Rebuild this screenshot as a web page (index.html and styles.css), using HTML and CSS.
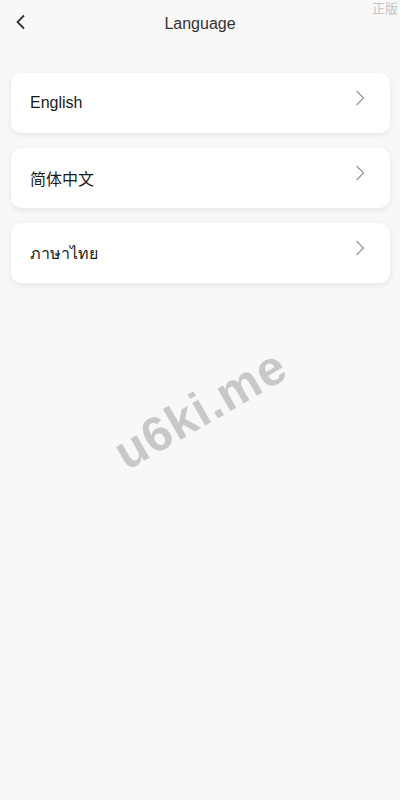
FILE: index.html
```html
<!DOCTYPE html>
<html lang="en">
<head>
    <meta charset="UTF-8">
    <meta name="viewport" content="width=device-width, initial-scale=1.0">
    <title>Language</title>
    <link rel="stylesheet" href="styles.css">
</head>
<body>
    <div class="page">
        <div class="header">
            <a class="back" href="#">
                <svg width="12" height="16" viewBox="0 0 12 16"><path d="M9 1.5 L2.5 8 L9 14.5" fill="none" stroke="#333" stroke-width="1.8"/></svg>
            </a>
            <h1>Language</h1>
            <span class="tag">正版</span>
        </div>
        <div class="lang-list">
            <a class="lang-item" href="#">
                <span>English</span>
                <svg width="10" height="16" viewBox="0 0 10 16"><path d="M1.5 1 L8.5 8 L1.5 15" fill="none" stroke="#999" stroke-width="1.3"/></svg>
            </a>
            <a class="lang-item" href="#">
                <span>简体中文</span>
                <svg width="10" height="16" viewBox="0 0 10 16"><path d="M1.5 1 L8.5 8 L1.5 15" fill="none" stroke="#999" stroke-width="1.3"/></svg>
            </a>
            <a class="lang-item" href="#">
                <span>ภาษาไทย</span>
                <svg width="10" height="16" viewBox="0 0 10 16"><path d="M1.5 1 L8.5 8 L1.5 15" fill="none" stroke="#999" stroke-width="1.3"/></svg>
            </a>
        </div>
        <div class="watermark">u6ki.me</div>
    </div>
</body>
</html>
```

FILE: styles.css
```css
* {
    box-sizing: border-box;
}
body {
    margin: 0;
    font-family: Arial, "Liberation Sans", "Noto Sans CJK SC", sans-serif;
    background-color: #fff;
}
.page {
    position: relative;
    width: 400px;
    height: 800px;
    background-color: #f8f8f8;
    overflow: hidden;
}
.header {
    position: relative;
    height: 47px;
    display: flex;
    align-items: center;
    justify-content: center;
}
.header h1 {
    margin: 0;
    font-size: 16px;
    font-weight: normal;
    color: #333;
}
.back {
    position: absolute;
    left: 15px;
    top: 14px;
    line-height: 0;
}
.tag {
    position: absolute;
    right: 2px;
    top: -2px;
    font-size: 13px;
    color: #c4c4c4;
}
.lang-list {
    display: flex;
    flex-direction: column;
    gap: 15px;
    padding: 26px 10px 0 11px;
}
.lang-item {
    height: 60px;
    display: flex;
    align-items: center;
    justify-content: space-between;
    padding: 0 25px 0 19px;
    background-color: #fff;
    border-radius: 10px;
    box-shadow: 0 2px 6px rgba(0, 0, 0, 0.08);
    text-decoration: none;
    color: #1a1a1a;
    font-size: 16px;
}
.lang-item svg {
    margin-top: -10px;
}
.watermark {
    position: absolute;
    left: 104px;
    top: 432px;
    font-size: 49px;
    font-weight: bold;
    color: #c8c8c8;
    transform: rotate(-30deg);
    transform-origin: left top;
    letter-spacing: 1px;
    white-space: nowrap;
}
```
